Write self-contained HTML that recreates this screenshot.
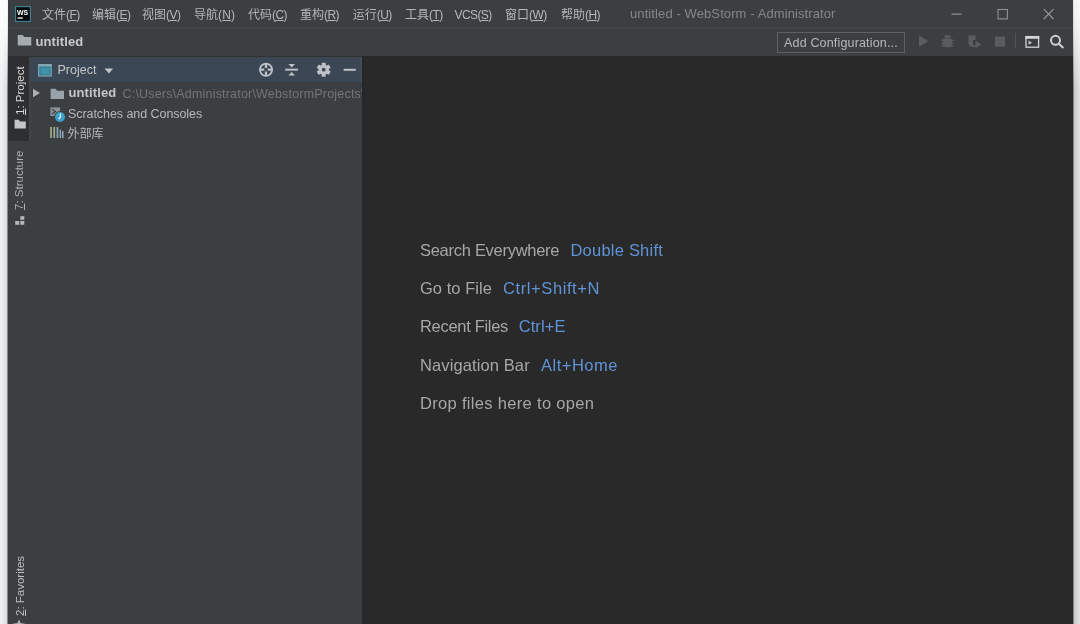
<!DOCTYPE html>
<html lang="zh">
<head>
<meta charset="utf-8">
<title>untitled - WebStorm - Administrator</title>
<style>
html,body{margin:0;padding:0;}
body{width:1080px;height:624px;overflow:hidden;position:relative;background:#f4f4f4;
  font-family:"Liberation Sans","Noto Sans CJK SC",sans-serif;font-size:12px;color:#bbbbbb;}
.abs{position:absolute;white-space:nowrap;}
#win{filter:blur(0.4px);position:absolute;left:7px;top:0;width:1066px;height:624px;background:#3c3f41;overflow:hidden;}
#edgeL{position:absolute;left:0;top:0;width:8px;height:624px;background:linear-gradient(180deg,rgba(255,255,255,0.95) 0,rgba(255,255,255,0.8) 30px,rgba(255,255,255,0) 90px),linear-gradient(90deg,#edeef0 0,#f0f1f2 1.5px,#e6e7e9 3px,#e4e5e7 4.5px,#dbdcde 6.6px,#96979a 7.4px,#3c3f41 8px);}
#edgeR{position:absolute;left:1072.6px;top:0;width:8px;height:624px;background:linear-gradient(180deg,rgba(255,255,255,0.8) 0,rgba(255,255,255,0.65) 30px,rgba(255,255,255,0) 90px),linear-gradient(90deg,#5a5a5a 0,#9a9a9a 0.8px,#c8c8c8 1.4px,#cfcfcf 3px,#e7e7e7 8px);}
/* coordinates inside #win are page-x minus 7 */
#titlebar{position:absolute;left:0;top:0;width:1066px;height:28px;background:#3c3f41;}
#titlesep{position:absolute;left:0;top:27px;width:1066px;height:2px;background:#424547;border-bottom:1px solid #383b3d;}
#navbar{position:absolute;left:0;top:29px;width:1066px;height:27px;background:#3c3f41;}
#navsep{position:absolute;left:0;top:56px;width:1066px;height:1px;background:#2f3132;}
.menu{top:8px;height:15px;line-height:15px;font-size:12px;color:#b4b6b7;}
.menu i{font-style:normal;letter-spacing:-0.55px;}
.menu u{text-decoration:underline;text-underline-offset:1px;}
#wtitle{top:5.5px;line-height:15px;font-size:13px;letter-spacing:0.1px;color:#858788;}
#stripe{position:absolute;left:0;top:57px;width:22px;height:567px;background:#3c3f41;}
#stripe .sel{position:absolute;left:0;top:0;width:22px;height:84px;background:#2d2f30;}
#stripesep{position:absolute;left:22px;top:57px;width:2px;height:84px;background:#424547;}
.vtext{position:absolute;transform-origin:0 0;transform:rotate(-90deg);white-space:nowrap;font-size:11.5px;line-height:14px;color:#bbbbbb;}
#proj{position:absolute;left:24px;top:57px;width:331px;height:567px;background:#3c3f41;}
#projhead{position:absolute;left:0;top:0;width:329px;height:25px;background:#3b4754;border-right:2px solid #454a50;}
#editor{border-left:3px solid #262728;box-sizing:border-box;position:absolute;left:354.6px;top:56px;width:712px;height:568px;background:#292929;}
.row{font-size:12.5px;line-height:16px;color:#b6b8b9;}
.hint{font-size:16.5px;line-height:20px;color:#a7a7a7;left:55.4px;}
.hint.k{color:#5f93d6;}
#navname{font-weight:bold;font-size:13px;letter-spacing:0.12px;line-height:16px;color:#c8c9ca;}
#addcfg{box-sizing:border-box;width:128px;height:21px;border:1px solid #5e6162;font-size:12.5px;line-height:19px;padding:1.6px 0 0 6px;letter-spacing:0.17px;color:#b6b8b9;}
#projtitle{font-size:12.5px;line-height:16px;color:#c2c4c5;}
#proj{overflow:hidden;}
</style>
</head>
<body>
<div id="win">
  <div id="titlebar">
    <svg class="abs" style="left:8px;top:6px" width="16" height="16" viewBox="0 0 16 16">
      <rect x="0" y="0" width="16" height="16" fill="#3f7f8d"/>
      <rect x="1.2" y="1.2" width="13.6" height="13.6" fill="#05090c"/>
      <text x="1.9" y="8.6" font-family="Liberation Sans, sans-serif" font-weight="bold" font-size="7.8" fill="#ffffff" textLength="11.2" lengthAdjust="spacingAndGlyphs">WS</text>
      <rect x="2.6" y="11.4" width="5.2" height="1.3" fill="#ffffff"/>
    </svg>
    <div class="abs menu" style="left:35px">文件<i>(<u>F</u>)</i></div>
    <div class="abs menu" style="left:85px">编辑<i>(<u>E</u>)</i></div>
    <div class="abs menu" style="left:135px">视图<i>(<u>V</u>)</i></div>
    <div class="abs menu" style="left:187px">导航<i style="letter-spacing:0.2px">(<u>N</u>)</i></div>
    <div class="abs menu" style="left:241px">代码<i>(<u>C</u>)</i></div>
    <div class="abs menu" style="left:293px">重构<i>(<u>R</u>)</i></div>
    <div class="abs menu" style="left:345.7px">运行<i>(<u>U</u>)</i></div>
    <div class="abs menu" style="left:398px">工具<i>(<u>T</u>)</i></div>
    <div class="abs menu" style="left:447.5px;letter-spacing:-0.6px">VCS<i>(<u>S</u>)</i></div>
    <div class="abs menu" style="left:498px">窗口<i>(<u>W</u>)</i></div>
    <div class="abs menu" style="left:554px">帮助<i>(<u>H</u>)</i></div>
    <div class="abs" id="wtitle" style="left:623px">untitled - WebStorm - Administrator</div>
    <svg class="abs" style="left:936px;top:4px" width="120" height="20" viewBox="0 0 120 20">
      <rect x="8.5" y="9.6" width="10" height="1.1" fill="#96989a"/>
      <rect x="55" y="5.5" width="9.4" height="9.4" fill="none" stroke="#8f9193" stroke-width="1.1"/>
      <path d="M100.8 5.2 L110.6 15 M110.6 5.2 L100.8 15" stroke="#96989a" stroke-width="1.15" fill="none"/>
    </svg>
  </div>
  <div id="titlesep"></div>
  <div id="navbar">
    <svg class="abs" style="left:10px;top:5.2px" width="16" height="13" viewBox="0 0 16 13">
      <path d="M0.7 1 H5.8 L7.2 2.9 H14.3 V11.6 H0.7 Z" fill="#a4abb1"/>
    </svg>
    <div class="abs" id="navname" style="left:28.5px;top:4.5px">untitled</div>
    <div class="abs" id="addcfg" style="left:770px;top:2.6px">Add Configuration...</div>
    <svg class="abs" style="left:908px;top:4.3px" width="160" height="20" viewBox="0 0 160 20">
      <!-- run (disabled) -->
      <path d="M4 2.5 L13.5 8.2 L4 14 Z" fill="#5a5d5f"/>
      <!-- debug (disabled) -->
      <g fill="#5a5d5f">
        <rect x="29.5" y="2.2" width="6" height="2.6" rx="1"/>
        <rect x="28" y="5.2" width="9" height="9" rx="2.6"/>
        <rect x="26.4" y="6.6" width="12.2" height="1.3"/>
        <rect x="26.4" y="9.4" width="12.2" height="1.3"/>
        <rect x="26.4" y="12.2" width="12.2" height="1.3"/>
      </g>
      <!-- coverage (disabled) -->
      <g fill="#5a5d5f">
        <path d="M53.5 2.5 H60.5 V7 H58 V12 H60 V14 H56 L53.5 11.5 Z"/>
        <path d="M60.5 8 L66.5 11.6 L60.5 15.2 Z"/>
      </g>
      <!-- stop (disabled) -->
      <rect x="80" y="3.6" width="10" height="10" fill="#5a5d5f"/>
      <!-- separator -->
      <rect x="100" y="-0.8" width="1" height="16" fill="#515456"/>
      <!-- run anything / structure icon -->
      <g>
        <rect x="111" y="3.6" width="12.6" height="10.6" fill="none" stroke="#d3d4d4" stroke-width="1.3"/>
        <rect x="110.4" y="3" width="13.8" height="2.8" fill="#d3d4d4"/>
        <path d="M113.6 7.6 L117 9.7 L113.6 11.8 Z" fill="#c8c9c9"/>
      </g>
      <!-- search -->
      <g fill="none" stroke="#cdcece">
        <circle cx="140.5" cy="7.3" r="4.5" stroke-width="2"/>
        <path d="M143.9 10.7 L147.8 14.4" stroke-width="2.1" stroke-linecap="round"/>
      </g>
    </svg>
  </div>
  <div id="navsep"></div>
  <div id="stripe"><div class="sel"></div>
    <div class="vtext" style="left:5.8px;top:57.5px;color:#d6d7d7"><u>1</u>: Project</div>
    <svg class="abs" style="left:6.5px;top:61.5px" width="13" height="11" viewBox="0 0 13 11">
      <path d="M0.6 0.8 H4.8 L6 2.6 H11.8 V9.6 H0.6 Z" fill="#c3c6c8"/>
    </svg>
    <div class="vtext" style="left:5.4px;top:153px;color:#adafb0"><u>7</u>: Structure</div>
    <svg class="abs" style="left:7.5px;top:159px" width="10" height="10" viewBox="0 0 10 10">
      <g fill="#b4b6b7"><rect x="5.3" y="0.2" width="4" height="3.6"/><rect x="0.2" y="5" width="4" height="3.8"/><rect x="5.3" y="5" width="4" height="3.8"/></g>
    </svg>
    <div class="vtext" style="left:5.8px;top:558.5px;color:#bcbebf"><u>2</u>: Favorites</div>
    <svg class="abs" style="left:6.3px;top:562px" width="12" height="12" viewBox="0 0 12 12">
      <path d="M6 0.4 L7.7 4.2 L11.8 4.6 L8.7 7.3 L9.6 11.4 L6 9.2 L2.4 11.4 L3.3 7.3 L0.2 4.6 L4.3 4.2 Z" fill="#b4b6b7"/>
    </svg>
  </div>
  <div id="stripesep"></div>
  <div id="proj"><div id="projhead">
      <svg class="abs" style="left:7px;top:7px" width="15" height="13" viewBox="0 0 15 13">
        <rect x="0.6" y="0.6" width="12.6" height="11.4" fill="#3b8196" stroke="#7fa6b1" stroke-width="1.1"/>
        <rect x="0.6" y="0.4" width="12.6" height="2" fill="#87a9b3"/>
        <rect x="2.8" y="4" width="8.2" height="6" fill="#3f93ab"/>
      </svg>
      <div class="abs" id="projtitle" style="left:26.5px;top:4.9px">Project</div>
      <svg class="abs" style="left:73px;top:11px" width="10" height="6" viewBox="0 0 10 6"><path d="M0.6 0.6 H9.2 L4.9 5.6 Z" fill="#c3c5c6"/></svg>
      <svg class="abs" style="left:226px;top:4px" width="104" height="18" viewBox="0 0 104 18">
        <!-- locate -->
        <g fill="none" stroke="#bec2c7">
          <circle cx="9" cy="8.7" r="6.1" stroke-width="1.8"/>
          <path d="M9 2.4 V7 M9 10.4 V15 M2.7 8.7 H7.3 M10.7 8.7 H15.3" stroke-width="2.3"/>
        </g>
        <!-- collapse all -->
        <g fill="#bec2c7">
          <rect x="28.2" y="7.7" width="12.8" height="1.9"/>
          <path d="M31.4 2.9 H38 L34.7 6.4 Z"/>
          <path d="M31.4 14.4 H38 L34.7 10.9 Z"/>
        </g>
        <!-- gear -->
        <g transform="translate(66.7 8.7)">
          <g fill="#bec2c7">
            <rect x="-2" y="-7" width="4" height="14" rx="0.8"/>
            <rect x="-2" y="-7" width="4" height="14" rx="0.8" transform="rotate(60)"/>
            <rect x="-2" y="-7" width="4" height="14" rx="0.8" transform="rotate(120)"/>
            <circle r="5"/>
          </g>
          <circle r="1.9" fill="#3b4754"/>
        </g>
        <!-- hide -->
        <rect x="86.6" y="7.8" width="12.2" height="2" fill="#bec2c7"/>
      </svg>
    </div>
    <!-- tree -->
    <svg class="abs" style="left:1px;top:31px" width="9" height="10" viewBox="0 0 9 10"><path d="M1 0.8 L8 5 L1 9.2 Z" fill="#adb0b2"/></svg>
    <svg class="abs" style="left:18.5px;top:31px" width="15" height="12" viewBox="0 0 15 12">
      <path d="M0.6 0.8 H5.6 L7 2.8 H14 V11 H0.6 Z" fill="#97a2ab"/>
    </svg>
    <div class="abs row" style="left:37.5px;top:28.4px;font-weight:bold;font-size:13px;letter-spacing:0.12px;color:#c4c6c7">untitled</div>
    <div class="abs row" id="path" style="left:91.5px;top:28.6px;letter-spacing:0.19px;color:#727577">C:\Users\Administrator\WebstormProjects\untitled</div>
    <svg class="abs" style="left:18.5px;top:49px" width="17" height="18" viewBox="0 0 17 18">
      <rect x="0.4" y="1.4" width="9.6" height="8.6" fill="#8b959c"/>
      <path d="M2 3.2 L5.4 5.6 L2 8" fill="none" stroke="#3c3f41" stroke-width="1.2"/>
      <circle cx="10" cy="11" r="5.9" fill="#3c3f41"/>
      <circle cx="10" cy="11" r="5" fill="#3d9fcb"/>
      <path d="M10.4 7.6 V11.2 L8.6 13" fill="none" stroke="#d9edf7" stroke-width="1.4"/>
    </svg>
    <div class="abs row" style="left:37px;top:49px;letter-spacing:-0.06px">Scratches and Consoles</div>
    <svg class="abs" style="left:19px;top:69.4px" width="14" height="13" viewBox="0 0 14 13">
      <g fill="#9fb08c"><rect x="0.2" y="1" width="1.7" height="11"/><rect x="3.4" y="1" width="1.7" height="11"/></g>
      <g fill="#8fa6b8"><rect x="6.6" y="1" width="1.7" height="11"/><rect x="9.6" y="3.6" width="1.5" height="8.4"/><rect x="12" y="5" width="1.5" height="7"/></g>
    </svg>
    <div class="abs row" style="left:36.5px;top:68.8px;font-size:12px">外部库</div>
  </div>
  <div id="editor">
    <div class="abs hint" style="top:184px;letter-spacing:-0.28px">Search Everywhere</div>
    <div class="abs hint k" style="top:184px;left:205.9px;letter-spacing:0.22px">Double Shift</div>
    <div class="abs hint" style="top:222px;letter-spacing:0.05px">Go to File</div>
    <div class="abs hint k" style="top:222px;left:138.4px;letter-spacing:0.6px">Ctrl+Shift+N</div>
    <div class="abs hint" style="top:260px;letter-spacing:-0.31px">Recent Files</div>
    <div class="abs hint k" style="top:260px;left:154.1px;letter-spacing:0.08px">Ctrl+E</div>
    <div class="abs hint" style="top:299px;letter-spacing:0.11px">Navigation Bar</div>
    <div class="abs hint k" style="top:299px;left:176.4px;letter-spacing:0.5px">Alt+Home</div>
    <div class="abs hint" style="top:337px;letter-spacing:0.32px">Drop files here to open</div>
  </div>
</div>
<div id="edgeL"></div>
<div id="edgeR"></div>
</body>
</html>
